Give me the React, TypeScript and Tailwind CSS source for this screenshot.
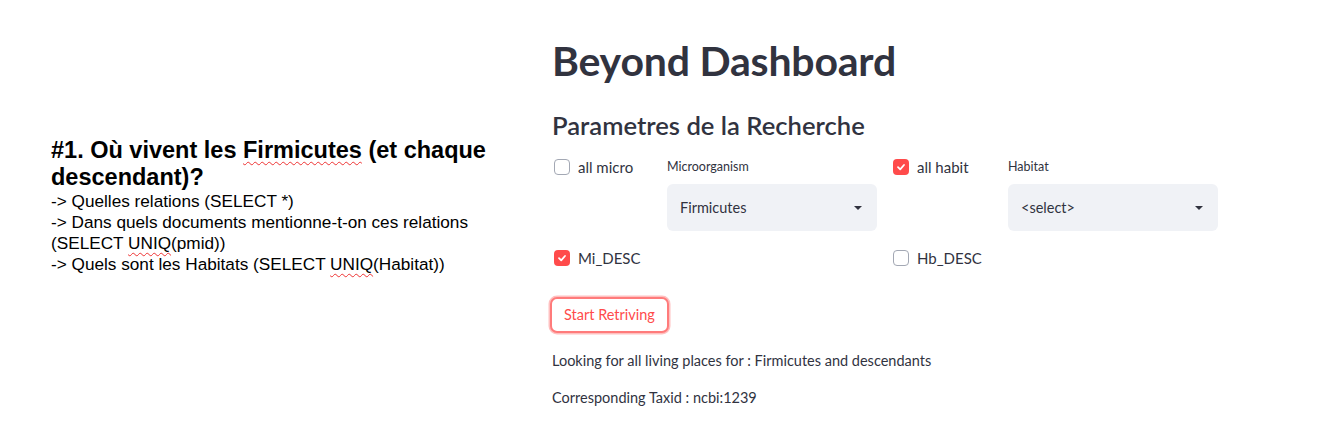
import { useState } from 'react';

function Checkbox({ checked, label }: { checked: boolean; label: string }) {
  return (
    <div className="flex items-center gap-[8px] h-[20px]">
      {checked ? (
        <span className="w-[16px] h-[16px] rounded-[4px] bg-[#ff4b4b] flex items-center justify-center">
          <svg width="10" height="10" viewBox="0 0 10 10">
            <path d="M2 5.2 L4.2 7.3 L8 3" fill="none" stroke="white" strokeWidth="1.8" strokeLinecap="round" strokeLinejoin="round" />
          </svg>
        </span>
      ) : (
        <span className="w-[16px] h-[16px] rounded-[4px] border border-[#a3a8b4] bg-white" />
      )}
      <span className="text-[15px] text-[#31333f]">{label}</span>
    </div>
  );
}

function Select({ label, value }: { label: string; value: string }) {
  return (
    <div className="flex flex-col">
      <div className="text-[12.5px] text-[#31333f] h-[18px] leading-[18px] mt-[1px]">{label}</div>
      <div className="mt-[8px] h-[47px] w-[210px] rounded-[6px] bg-[#f0f2f6] flex items-center justify-between pl-[13px] pr-[15px]">
        <span className="text-[14.5px] text-[#31333f]">{value}</span>
        <svg width="8" height="4" viewBox="0 0 8 4">
          <path d="M0 0 H8 L4 4 Z" fill="#31333f" />
        </svg>
      </div>
    </div>
  );
}

const squiggle = 'underline decoration-wavy decoration-[#e33] decoration-1 underline-offset-[3px]';

export default function App() {
  const [micro] = useState('Firmicutes');

  return (
    <div className="w-[1325px] h-[447px] bg-white flex" style={{ fontFamily: 'Lato, sans-serif' }}>
      <div className="w-[552px] pl-[51px] pt-[137px]" style={{ fontFamily: '"Liberation Sans", Arial, sans-serif' }}>
        <div className="text-[23.5px] font-bold leading-[27px] text-black">
          #1. Où vivent les <span className={squiggle}>Firmicutes</span> (et chaque descendant)?
        </div>
        <div className="text-[17.2px] leading-[21px] text-black">
          <div>-&gt; Quelles relations (SELECT *)</div>
          <div>-&gt; Dans quels documents mentionne-t-on ces relations</div>
          <div>
            (SELECT <span className={squiggle}>UNIQ</span>(pmid))
          </div>
          <div>
            -&gt; Quels sont les Habitats (SELECT <span className={squiggle}>UNIQ</span>(Habitat))
          </div>
        </div>
      </div>

      <div className="flex-1 pt-[36px] text-[#31333f]">
        <h1 className="text-[41px] font-bold leading-[50px] tracking-[-0.2px]">Beyond Dashboard</h1>
        <h3 className="mt-[22px] text-[25.6px] font-semibold leading-[34px]">Parametres de la Recherche</h3>

        <div className="mt-[15px] grid grid-cols-[97px_210px_99px_210px] gap-x-[16px] pl-[2px]">
          <Checkbox checked={false} label="all micro" />
          <Select label="Microorganism" value={micro} />
          <Checkbox checked={true} label="all habit" />
          <Select label="Habitat" value="<select>" />
        </div>

        <div className="mt-[17px] grid grid-cols-[97px_210px_99px_210px] gap-x-[16px] pl-[2px]">
          <Checkbox checked={true} label="Mi_DESC" />
          <div />
          <Checkbox checked={false} label="Hb_DESC" />
          <div />
        </div>

        <button className="mt-[29px] ml-[-2px] h-[36px] px-[12px] rounded-[7px] border-2 border-[#ff7b7b] shadow-[0_0_0_1.5px_rgba(255,75,75,0.35)] bg-white text-[14.5px] text-[#ff4b4b]">
          Start Retriving
        </button>

        <p className="mt-[17px] text-[14.5px] leading-[22px]">Looking for all living places for : Firmicutes and descendants</p>
        <p className="mt-[15px] text-[14.5px] leading-[22px]">Corresponding Taxid : ncbi:1239</p>
      </div>
    </div>
  );
}
